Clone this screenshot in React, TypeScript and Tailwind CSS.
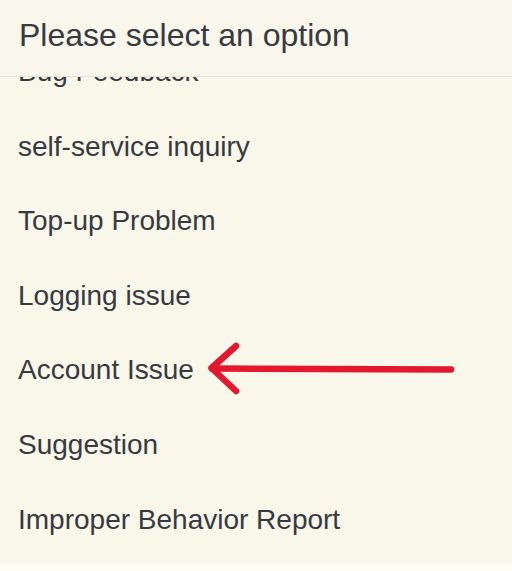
import React from "react";

const items = [
  "Bug Feedback",
  "self-service inquiry",
  "Top-up Problem",
  "Logging issue",
  "Account Issue",
  "Suggestion",
  "Improper Behavior Report",
];

export default function App() {
  return (
    <div
      className="w-[512px] h-[571px] bg-[#f9f6ea] flex flex-col overflow-hidden text-[#373a40]"
      style={{ fontFamily: '"Liberation Sans", Arial, sans-serif' }}
    >
      <div className="relative z-10 h-[77px] shrink-0 bg-[#f9f6eb] border-b border-[#e6e3d6] pl-[19px] pt-[15px]">
        <div className="text-[32px] leading-[40px]">Please select an option</div>
      </div>
      <div className="relative flex-1 overflow-hidden">
        <ul className="mt-[-42px]">
          {items.map((t) => (
            <li key={t} className="relative h-[74.6px] leading-[74.6px] pl-[18px] text-[28px]">
              {t}
              {t === "Account Issue" && (
                <svg
                  className="absolute left-[200px] top-0"
                  width="270"
                  height="74"
                  viewBox="0 0 270 74"
                >
                  <g stroke="#e3182f" strokeWidth="6.5" strokeLinecap="round" strokeLinejoin="round" fill="none">
                    <line x1="12" y1="35.5" x2="251" y2="36.5" />
                    <polyline points="36,13 11.5,35 36,58" />
                  </g>
                </svg>
              )}
            </li>
          ))}
        </ul>
        <div className="absolute left-0 right-0 bottom-0 h-[7px] bg-[#fffef2]" />
      </div>
    </div>
  );
}
